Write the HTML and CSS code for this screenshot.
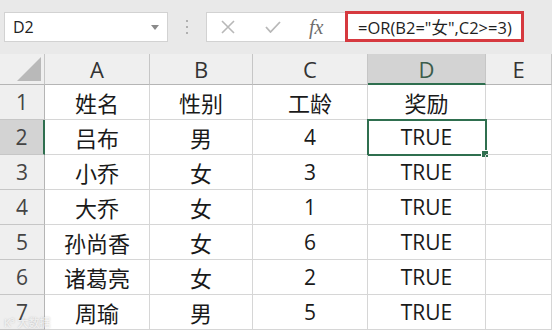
FILE: index.html
```html
<!DOCTYPE html>
<html lang="zh">
<head>
    <meta charset="UTF-8">
    <title>OR 函数</title>
    <link rel="stylesheet" href="styles.css">
</head>
<body>
    <div class="toolbar">
        <div class="namebox">
            <span>D2</span>
            <svg class="caret" width="8" height="5" viewBox="0 0 8 5"><path d="M0 0h8L4 5z" fill="#8a8a8a"/></svg>
        </div>
        <svg class="grip" width="4" height="14" viewBox="0 0 4 14">
            <rect x="1" y="0" width="2" height="2" fill="#b0b0b0"/>
            <rect x="1" y="6" width="2" height="2" fill="#b0b0b0"/>
            <rect x="1" y="12" width="2" height="2" fill="#b0b0b0"/>
        </svg>
        <div class="formula">
            <div class="formula-btns">
                <svg width="14" height="14" viewBox="0 0 14 14"><path d="M1 1l12 12M13 1L1 13" stroke="#b8b8b8" stroke-width="1.6"/></svg>
                <svg width="16" height="12" viewBox="0 0 16 12"><path d="M1 6l4.5 5L15 1" stroke="#b8b8b8" stroke-width="1.8" fill="none"/></svg>
                <span class="fx">fx</span>
            </div>
            <div class="formula-input">
                <div class="highlight">=OR(B2="女",C2&gt;=3)</div>
            </div>
        </div>
    </div>

    <div class="sheet">
        <div class="corner">
            <svg width="24" height="24" viewBox="0 0 24 24"><path d="M24 0V24H0z" fill="#b9b9b9"/></svg>
        </div>
        <div class="col-head">A</div>
        <div class="col-head">B</div>
        <div class="col-head">C</div>
        <div class="col-head active">D</div>
        <div class="col-head">E</div>

        <div class="row-head">1</div>
        <div class="cell zh">姓名</div><div class="cell zh">性别</div><div class="cell zh">工龄</div><div class="cell zh">奖励</div><div class="cell"></div>

        <div class="row-head active">2</div>
        <div class="cell zh">吕布</div><div class="cell zh">男</div><div class="cell">4</div><div class="cell selected">TRUE<span class="handle"></span></div><div class="cell"></div>

        <div class="row-head">3</div>
        <div class="cell zh">小乔</div><div class="cell zh">女</div><div class="cell">3</div><div class="cell">TRUE</div><div class="cell"></div>

        <div class="row-head">4</div>
        <div class="cell zh">大乔</div><div class="cell zh">女</div><div class="cell">1</div><div class="cell">TRUE</div><div class="cell"></div>

        <div class="row-head">5</div>
        <div class="cell zh">孙尚香</div><div class="cell zh">女</div><div class="cell">6</div><div class="cell">TRUE</div><div class="cell"></div>

        <div class="row-head">6</div>
        <div class="cell zh">诸葛亮</div><div class="cell zh">女</div><div class="cell">2</div><div class="cell">TRUE</div><div class="cell"></div>

        <div class="row-head">7</div>
        <div class="cell zh">周瑜</div><div class="cell zh">男</div><div class="cell">5</div><div class="cell">TRUE</div><div class="cell"></div>
    </div>

    <div class="watermark">K³ 大数据</div>
</body>
</html>
```

FILE: styles.css
```css
:root {
    --bar: #e9e9e9;
    --head: #efefef;
    --head-active: #d3d3d3;
    --grid: #d6d6d6;
    --head-line: #c6c6c6;
    --green: #2f6f4f;
    --text: #1a1a1a;
}

* {
    margin: 0;
    padding: 0;
    box-sizing: border-box;
}

body {
    width: 552px;
    height: 331px;
    overflow: hidden;
    background: #fff;
    font-family: "Open Sans", "Noto Sans CJK SC", sans-serif;
    color: var(--text);
    position: relative;
}

.toolbar {
    height: 54px;
    background: var(--bar);
    display: flex;
    align-items: flex-start;
    padding: 12px 0 0 4px;
}

.namebox {
    width: 164px;
    height: 30px;
    background: #fff;
    border: 1px solid #d2d2d2;
    display: flex;
    align-items: center;
    justify-content: space-between;
    padding: 0 8px;
    font-size: 16px;
    color: #222;
}

.grip {
    margin: 8px 17px 0 17px;
}

.formula {
    width: 318px;
    height: 30px;
    background: #fff;
    border: 1px solid #d2d2d2;
    display: flex;
    align-items: center;
}

.formula-btns {
    width: 138px;
    display: flex;
    align-items: center;
    gap: 30px;
    padding-left: 14px;
}

.fx {
    font-family: "Liberation Serif", "DejaVu Serif", serif;
    font-style: italic;
    font-size: 20px;
    color: #6e6e6e;
    margin-left: -2px;
}

.formula-input {
    flex: 1;
    height: 100%;
    position: relative;
}

.highlight {
    position: absolute;
    top: -2px;
    left: 0;
    right: -1px;
    bottom: -1px;
    border: 3px solid #d6393f;
    padding-left: 10px;
    display: flex;
    align-items: center;
    font-size: 16.5px;
    color: #1e1e1e;
}

.sheet {
    display: grid;
    grid-template-columns: 45px 105px 103px 115px 118px 66px;
    grid-template-rows: 31px repeat(7, 35px);
}

.corner {
    background: var(--head);
    border-right: 1px solid var(--head-line);
    border-bottom: 1px solid #b5b5b5;
    display: flex;
    align-items: flex-end;
    justify-content: flex-end;
    padding: 0 3px 3px 0;
}

.col-head {
    background: var(--head);
    border-right: 1px solid var(--head-line);
    border-bottom: 1px solid #b5b5b5;
    display: flex;
    align-items: center;
    justify-content: center;
    font-size: 22px;
    color: #333;
}

.col-head.active {
    background: var(--head-active);
    border-bottom: 2px solid var(--green);
    color: #3b5c4b;
}

.row-head {
    background: var(--head);
    border-right: 1px solid #b5b5b5;
    border-bottom: 1px solid var(--head-line);
    display: flex;
    align-items: center;
    justify-content: center;
    font-size: 21px;
    color: #444;
}

.row-head.active {
    background: var(--head-active);
    border-right: 2px solid var(--green);
}

.cell {
    border-right: 1px solid var(--grid);
    border-bottom: 1px solid var(--grid);
    display: flex;
    align-items: center;
    justify-content: center;
    font-size: 21px;
    position: relative;
}

.cell.zh {
    font-size: 22px;
}

.cell.selected {
    outline: 2px solid var(--green);
    outline-offset: -1px;
}

.handle {
    position: absolute;
    right: -4px;
    bottom: -4px;
    width: 6px;
    height: 6px;
    background: var(--green);
    border: 1px solid #fff;
    box-sizing: content-box;
}

.watermark {
    position: absolute;
    left: 4px;
    bottom: 1px;
    font-size: 11px;
    color: rgba(255, 255, 255, 0.75);
    text-shadow: 0 0 2px rgba(0, 0, 0, 0.25);
}
```
